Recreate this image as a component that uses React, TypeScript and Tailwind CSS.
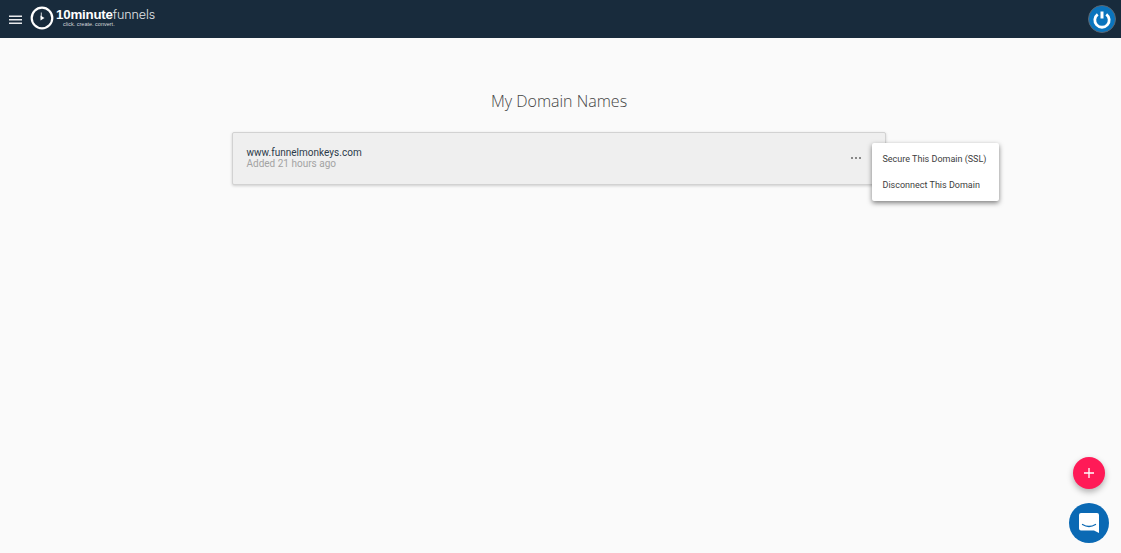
export default function App() {
  return (
    <div className="relative h-[553px] w-full overflow-hidden bg-[#fafafa] font-['Roboto',sans-serif]">
      <header className="flex h-[38px] items-center justify-between bg-[#182b3c] pl-[9px] pr-[5px]">
        <div className="flex items-center">
          <svg width="13" height="10" viewBox="0 0 13 10" className="mr-[9px] mt-[1px]">
            <rect x="0" y="0.5" width="13" height="1.5" fill="#e8eaec" />
            <rect x="0" y="4" width="13" height="1.5" fill="#e8eaec" />
            <rect x="0" y="7.5" width="13" height="1.5" fill="#e8eaec" />
          </svg>
          <svg width="24" height="24" viewBox="0 0 24 24" className="mb-[3px] ml-[-1px] mr-[2px]">
            <circle cx="12" cy="12" r="10.3" fill="none" stroke="#fff" strokeWidth="2.2" />
            <path d="M10.5 9.5l4 2.5-4 2.5z" fill="#fff" />
            <path d="M11.3 6.5v5" fill="none" stroke="#fff" strokeWidth="0.8" />
          </svg>
          <div className="mb-[3px] flex flex-col items-start">
            <div className="flex h-[14px] items-center leading-[14px] text-white font-['Liberation_Sans',sans-serif]">
              <span className="text-[13.3px] font-bold tracking-[-0.2px]">10minute</span>
              <span className="font-['Inter',sans-serif] text-[12.5px] font-light tracking-[-0.1px] text-[#e2e5e8]">funnels</span>
            </div>
            <span className="ml-[7px] text-[5.5px] leading-[5px] text-[#d5d9dc] font-['Liberation_Sans',sans-serif]">click. create. convert.</span>
          </div>
        </div>
        <svg width="28" height="28" viewBox="0 0 28 28">
          <circle cx="14" cy="14" r="13.5" fill="#0a74bd" stroke="#5c6670" strokeWidth="1" />
          <path d="M9.7 9.3a7.2 7.2 0 1 0 8.6 0" fill="none" stroke="#fff" strokeWidth="2.8" />
          <path d="M14 6.5v7" stroke="#fff" strokeWidth="3" />
        </svg>
      </header>

      <main className="flex w-[1118px] flex-col items-center pt-[51px]">
        <h1 className="text-[16px] font-light leading-[24px] text-[#444] font-['Open_Sans',sans-serif]">My Domain Names</h1>
        <div className="relative mt-[19px] flex h-[53px] w-[654px] items-center justify-between rounded-[2px] border border-[#d2d2d2] bg-[#efefef] pl-[13.5px] pr-[24px] shadow-[0_1px_3px_rgba(0,0,0,0.18)]">
          <div className="mb-[1px] flex flex-col">
            <span className="text-[10px] leading-[11px] tracking-[0.02px] text-[#2b3a4a]">www.funnelmonkeys.com</span>
            <span className="text-[10px] leading-[11px] text-[#a3a3a3]">Added 21 hours ago</span>
          </div>
          <div className="mb-[1px] flex gap-[1.5px]">
            <span className="h-[2.5px] w-[2.5px] rounded-full bg-[#666]" />
            <span className="h-[2.5px] w-[2.5px] rounded-full bg-[#666]" />
            <span className="h-[2.5px] w-[2.5px] rounded-full bg-[#666]" />
          </div>
          <div className="absolute left-[639px] top-[10px] flex h-[58px] w-[127px] flex-col justify-center gap-[10px] rounded-[2px] bg-white pl-[10.5px] text-[9px] leading-[16px] text-[#3d3d3d] shadow-[0_2px_5px_rgba(0,0,0,0.5)]">
            <span>Secure This Domain (SSL)</span>
            <span>Disconnect This Domain</span>
          </div>
        </div>
      </main>

      <button className="absolute left-[1073px] top-[457px] flex h-[32px] w-[32px] items-center justify-center rounded-full bg-[#ff1a57] shadow-[0_3px_6px_rgba(0,0,0,0.3)]">
        <svg width="10" height="10" viewBox="0 0 10 10">
          <path d="M5 0v10M0 5h10" stroke="#fff" strokeWidth="1.3" />
        </svg>
      </button>
      <button className="absolute left-[1069px] top-[503px] flex h-[40px] w-[40px] items-center justify-center rounded-full bg-[#0a69b4]">
        <svg width="20" height="20" viewBox="0 0 20 20">
          <path d="M2 0h16a2 2 0 0 1 2 2v18l-5-2.5H2a2 2 0 0 1-2-2V2a2 2 0 0 1 2-2z" fill="#fff" />
          <path d="M3.5 11.5q6.5 4 13 0" fill="none" stroke="#0a69b4" strokeWidth="1.3" strokeLinecap="round" />
        </svg>
      </button>
    </div>
  );
}
